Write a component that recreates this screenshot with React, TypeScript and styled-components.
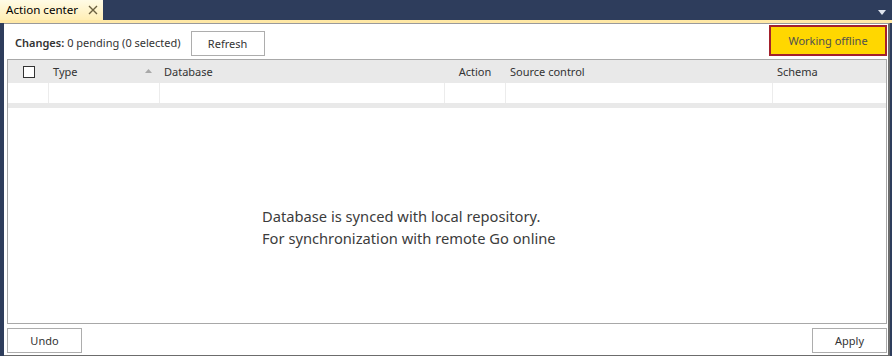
import React from "react";
import styled, { createGlobalStyle } from "styled-components";

const GlobalStyle = createGlobalStyle`
  html, body {
    margin: 0;
    padding: 0;
    background: #2e3d5c;
  }
  * {
    box-sizing: border-box;
  }
`;

const columns = [
  { key: "check", width: 41 },
  { key: "Type", width: 111, sortable: true },
  { key: "Database", width: 285 },
  { key: "Action", width: 61, center: true },
  { key: "Source control", width: 267 },
  { key: "Schema", width: 0 },
];

const App = () => {
  return (
    <Frame>
      <GlobalStyle />
      <TabStrip>
        <Tab>
          <TabTitle>Action center</TabTitle>
          <CloseIcon viewBox="0 0 10 10">
            <path d="M1 1 L9 9 M9 1 L1 9" stroke="#6b6040" strokeWidth="1.4" />
          </CloseIcon>
        </Tab>
        <DropArrow viewBox="0 0 8 5">
          <path d="M0 0 H8 L4 5 Z" fill="#dfe4ee" />
        </DropArrow>
      </TabStrip>
      <TabBand />
      <Panel>
        <Toolbar>
          <Summary>
            <strong>Changes:</strong> 0 pending (0 selected)
          </Summary>
          <Button>Refresh</Button>
          <Spacer />
          <OfflineButton>Working offline</OfflineButton>
        </Toolbar>
        <Grid>
          <HeaderRow>
            {columns.map((c) => (
              <HeaderCell key={c.key} $width={c.width} $center={c.center}>
                {c.key === "check" ? (
                  <CheckBox />
                ) : (
                  <>
                    <span>{c.key}</span>
                    {c.sortable && (
                      <SortArrow viewBox="0 0 7 4">
                        <path d="M0 4 L3.5 0 L7 4 Z" fill="#a8a8a8" />
                      </SortArrow>
                    )}
                  </>
                )}
              </HeaderCell>
            ))}
          </HeaderRow>
          <EmptyRow>
            {columns.map((c) => (
              <EmptyCell key={c.key} $width={c.width} />
            ))}
          </EmptyRow>
          <RowSeparator />
          <Message>
            Database is synced with local repository.
            <br />
            For synchronization with remote Go online
          </Message>
        </Grid>
        <Footer>
          <Button $wide>Undo</Button>
          <Button $wide>Apply</Button>
        </Footer>
      </Panel>
    </Frame>
  );
};

export default App;

const Frame = styled.div`
  width: 892px;
  height: 356px;
  display: flex;
  flex-direction: column;
  background: #2e3d5c;
  font-family: "Noto Sans", "Open Sans", sans-serif;
  font-size: 12px;
  color: #1e1e1e;
`;

const TabStrip = styled.div`
  height: 20px;
  display: flex;
  align-items: stretch;
  justify-content: space-between;
  padding-right: 6px;
`;

const Tab = styled.div`
  display: flex;
  align-items: center;
  gap: 10px;
  width: 103px;
  padding: 0 0 0 6px;
  background: linear-gradient(#fffbe6, #ffeeb5);
`;

const TabTitle = styled.span`
  font-size: 11.6px;
  color: #000;
  line-height: 20px;
`;

const CloseIcon = styled.svg`
  width: 10px;
  height: 10px;
`;

const DropArrow = styled.svg`
  width: 8px;
  height: 5px;
  align-self: center;
  margin-top: 4px;
`;

const TabBand = styled.div`
  height: 3px;
  background: #ffe8a6;
`;

const Panel = styled.div`
  flex: 1;
  display: flex;
  flex-direction: column;
  margin: 0 2px 0 4px;
  padding: 0 1px 2px 3px;
  background: #ffffff;
  border-top: 1px solid #9a9a9a;
  border-right: 2px solid #6c6c6c;
  border-bottom: 1px solid #6c6c6c;
`;

const Toolbar = styled.div`
  height: 35px;
  display: flex;
  align-items: center;
  padding-left: 8px;
`;

const Summary = styled.div`
  font-size: 11px;
  color: #333;
  margin-right: 10px;
  padding-top: 2px;
  strong {
    font-weight: 600;
  }
`;

const Spacer = styled.div`
  flex: 1;
`;

const Button = styled.button<{ $wide?: boolean }>`
  height: 25px;
  width: ${({ $wide }) => ($wide ? "75px" : "74px")};
  background: #ffffff;
  border: 1px solid #adadad;
  font-family: inherit;
  font-size: 11px;
  color: #333;
  padding: 0;
  margin-top: 3px;
`;

const OfflineButton = styled.button`
  width: 118px;
  height: 31px;
  align-self: flex-start;
  margin-top: 1px;
  background: #ffd700;
  border: 2px solid #a3202c;
  font-family: inherit;
  font-size: 11px;
  color: #505050;
  padding: 0;
`;

const Grid = styled.div`
  flex: 1;
  display: flex;
  flex-direction: column;
  border: 1px solid #a8a8a8;
  min-height: 0;
`;

const HeaderRow = styled.div`
  height: 23px;
  display: flex;
  background: #e9e9e9;
`;

const HeaderCell = styled.div<{ $width: number; $center?: boolean }>`
  ${({ $width }) => ($width ? `width: ${$width}px;` : "flex: 1;")}
  display: flex;
  align-items: center;
  justify-content: ${({ $center }) => ($center ? "center" : "space-between")};
  padding: 0 5px 0 4px;
  font-size: 11px;
  color: #333;
`;

const CheckBox = styled.span`
  width: 12px;
  height: 12px;
  border: 1px solid #333;
  background: #fff;
  margin-left: 11px;
`;

const SortArrow = styled.svg`
  width: 7px;
  height: 4px;
  margin-right: 3px;
  margin-bottom: 2px;
`;

const EmptyRow = styled.div`
  height: 20px;
  display: flex;
`;

const EmptyCell = styled.div<{ $width: number }>`
  ${({ $width }) => ($width ? `width: ${$width}px;` : "flex: 1;")}
  border-right: 1px solid #ececec;
  &:last-child {
    border-right: none;
  }
`;

const RowSeparator = styled.div`
  height: 5px;
  background: #e9e9e9;
`;

const Message = styled.div`
  flex: 1;
  display: flex;
  flex-direction: column;
  justify-content: center;
  padding-left: 254px;
  padding-top: 22px;
  font-size: 14.7px;
  line-height: 22px;
  color: #3c3c3c;
`;

const Footer = styled.div`
  display: flex;
  justify-content: space-between;
  padding-top: 1px;
`;
